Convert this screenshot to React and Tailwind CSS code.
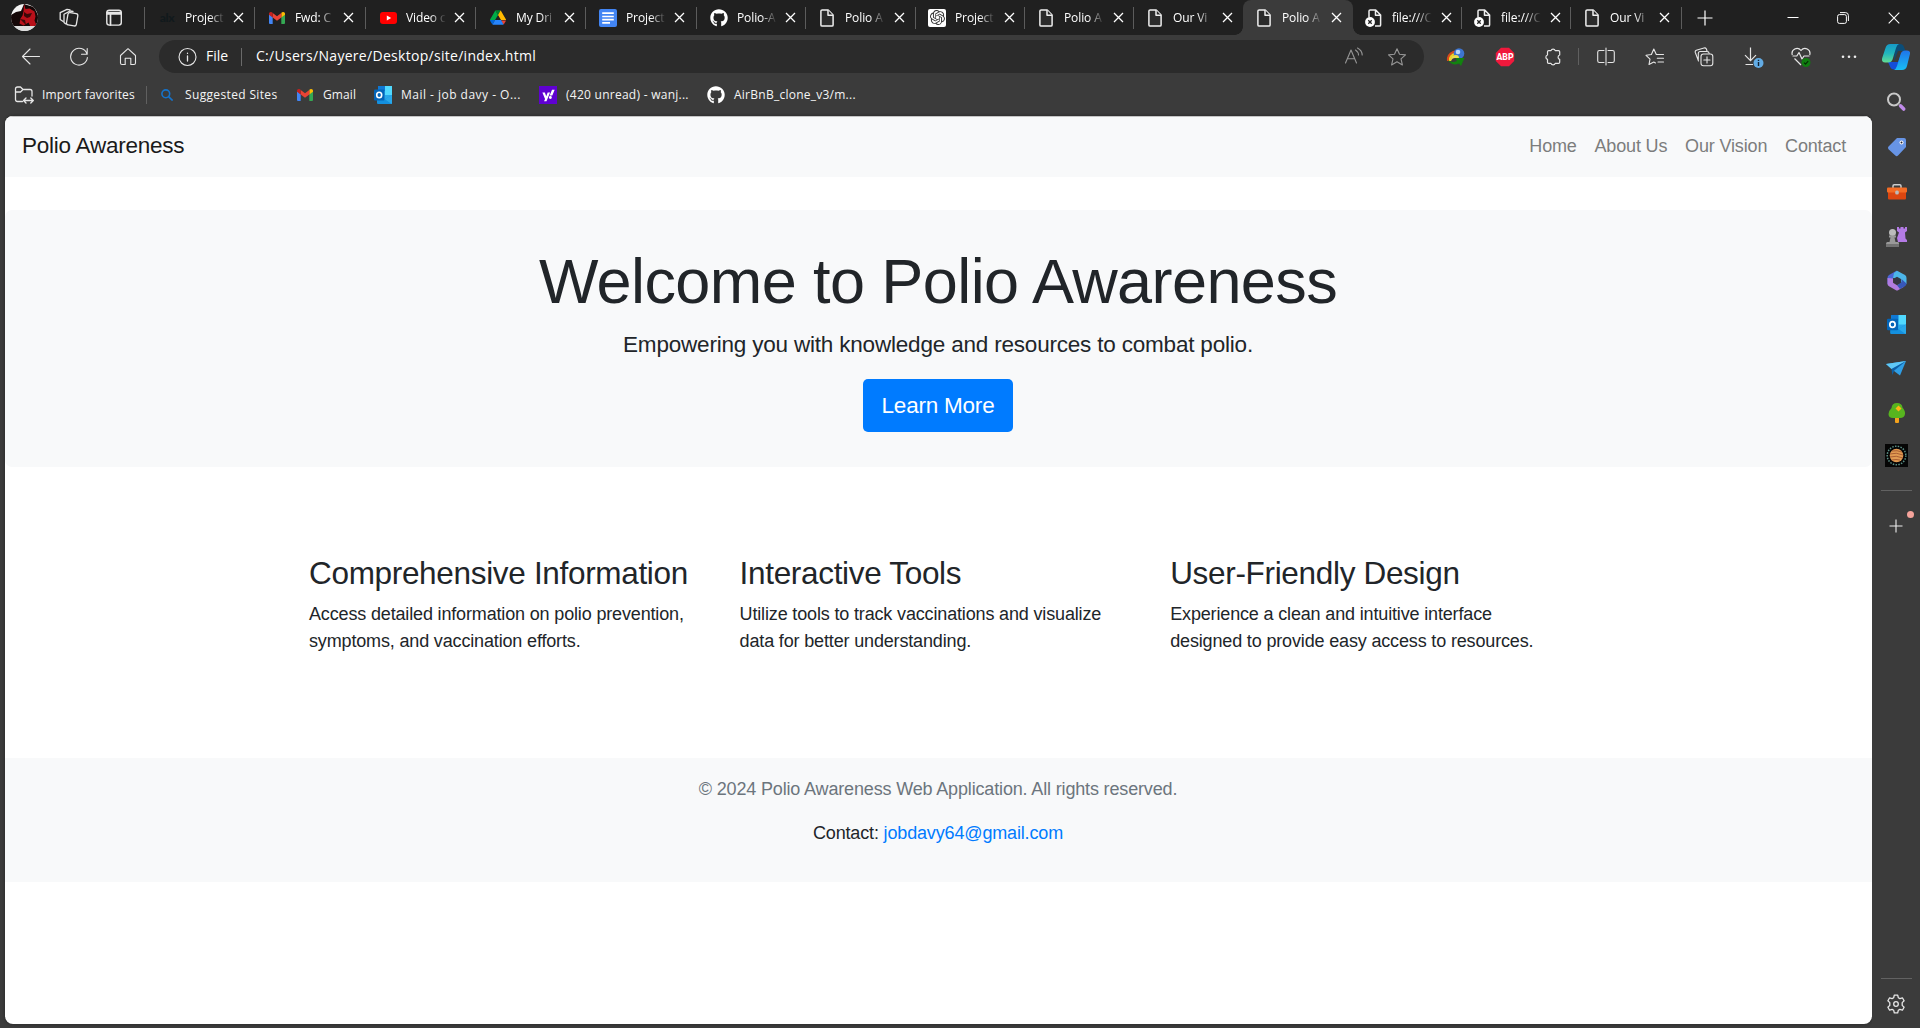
import React from "react";
import { FaGithub, FaYahoo } from "react-icons/fa";
import { SiOpenai } from "react-icons/si";

const UI = "font-['Open_Sans','Noto_Sans',sans-serif]";

function Line({ size = 20, w = 1.1, color = "#e6e6e6", children }) {
  return (
    <svg width={size} height={size} viewBox="0 0 20 20" fill="none" stroke={color} strokeWidth={w} strokeLinecap="round" strokeLinejoin="round" className="shrink-0">
      {children}
    </svg>
  );
}

function Gmail() {
  return (
    <svg width="16" height="12" viewBox="0 0 16 12">
      <path d="M0 2v9a1 1 0 0 0 1 1h2.7V5Z" fill="#4285f4" />
      <path d="M12.3 5v7H15a1 1 0 0 0 1-1V2Z" fill="#34a853" />
      <path d="M12.3 1v4.5L16 2.7V1.8C16 .2 14-.6 12.7.5Z" fill="#fbbc04" />
      <path d="M3.7 5.5V.9L8 4.2 12.3.9v4.6L8 8.7Z" fill="#ea4335" />
      <path d="M0 1.8v.9l3.7 2.8V.9L3.3.5C2-.6 0 .2 0 1.8Z" fill="#c5221f" />
    </svg>
  );
}

function YouTube() {
  return (
    <svg width="17" height="12" viewBox="0 0 17 12">
      <rect width="17" height="12" rx="3" fill="#f00" />
      <path d="M6.8 3.4v5.2L11.2 6Z" fill="#fff" />
    </svg>
  );
}

function Drive() {
  return (
    <svg width="16" height="15" viewBox="0 0 87 78">
      <path d="m6.6 66.9 3.9 6.6c.8 1.4 2 2.5 3.3 3.3l13.7-23.8H0c0 1.6.4 3.1 1.2 4.5Z" fill="#0066da" />
      <path d="M43.7 25 29.9 1.2c-1.4.8-2.5 1.9-3.3 3.3L1.2 48.5A9 9 0 0 0 0 53h27.5Z" fill="#00ac47" />
      <path d="M73.6 76.8c1.3-.8 2.5-1.9 3.3-3.3l8.3-13.9c.8-1.4 1.2-3 1.2-4.5H59.8l5.9 11.5Z" fill="#ea4335" />
      <path d="M43.7 25 57.4 1.2C56.100.4 54.500 0 52.900 0H34.400c-1.600 0-3.100.4-4.500 1.200Z" fill="#00832d" />
      <path d="M59.8 53H27.5L13.8 76.8c1.3.8 2.9 1.2 4.5 1.2h50.8c1.6 0 3.2-.4 4.5-1.2Z" fill="#2684fc" />
      <path d="m73.4 26.5-12.7-22c-.8-1.4-1.9-2.5-3.3-3.3L43.7 25l16.1 28h27.5c0-1.6-.4-3.1-1.2-4.5Z" fill="#ffba00" />
    </svg>
  );
}

function Docs() {
  return (
    <svg width="18" height="18" viewBox="0 0 18 18">
      <rect width="18" height="18" rx="2" fill="#4285f4" />
      <path d="M3.2 4.2h11.6M3.2 7.5h11.6M3.2 10.7h11.6M3.2 13.9h7.800" stroke="#fff" strokeWidth="1.7" />
    </svg>
  );
}

function Page() {
  return (
    <svg width="14" height="18" viewBox="0 0 14 18" fill="#2b2b2b" stroke="#eee" strokeWidth="1.5" strokeLinejoin="round">
      <path d="M2.2.9h6l4.9 5v10q0 1.200-1.200 1.200H2.200Q.9 17.100.9 15.900V2.100Q.9.9 2.200.9Z" />
      <path d="M8 1v5.200h5" />
    </svg>
  );
}

function PageError() {
  return (
    <svg width="17" height="18" viewBox="0 0 17 18" fill="none" stroke="#eee" strokeWidth="1.5" strokeLinejoin="round">
      <path d="M4 8V2.100Q4 .9 5.200.9h5.500l4.900 5v10q0 1.200-1.200 1.200H10M10.500 1v5.200h5" />
      <circle cx="5" cy="13" r="4.900" fill="#fff" stroke="none" />
      <path d="m3.300 11.300 3.400 3.400m0-3.400-3.400 3.400" stroke="#222" strokeWidth="1.300" />
    </svg>
  );
}

function ChatGpt() {
  return (
    <span className="flex size-[18px] items-center justify-center rounded-[2px] bg-white text-[#333]">
      <SiOpenai size={15} />
    </span>
  );
}

function Outlook({ size = 18 }) {
  return (
    <svg width={size} height={size} viewBox="0 0 18 18">
      <rect x="4" y="0" width="14" height="14" rx="1" fill="#28a8ea" />
      <rect x="4" y="0" width="7" height="5" fill="#0f78d4" />
      <rect x="11" y="0" width="7" height="9" fill="#50d9ff" />
      <path d="m3 9 7.500 4.500L18 9v8q0 1-1 1H4q-1 0-1-1Z" fill="#1490df" />
      <path d="m18 9-7 4.300L17.500 18q.5-.2.500-1Z" fill="#28a8ea" />
      <rect x="0" y="3.500" width="10.500" height="11" rx="1" fill="#0364b8" />
      <ellipse cx="5.200" cy="9" rx="2.500" ry="2.800" fill="none" stroke="#fff" strokeWidth="1.600" />
    </svg>
  );
}

const tabs = [
  { w: "w-[110px]", icon: <span className="font-['Lato'] text-[12px] font-black leading-none tracking-tight text-[#11191c]">alx</span>, text: "Project" },
  { w: "w-[111px]", icon: <Gmail />, text: "Fwd: C" },
  { w: "w-[110px]", icon: <YouTube />, text: "Video c" },
  { w: "w-[110px]", icon: <Drive />, text: "My Dri" },
  { w: "w-[111px]", icon: <Docs />, text: "Project" },
  { w: "w-[109px]", icon: <FaGithub size={18} color="#fff" />, text: "Polio-A" },
  { w: "w-[110px]", icon: <Page />, text: "Polio A", shift: true },
  { w: "w-[109px]", icon: <ChatGpt />, text: "Project", shift: true },
  { w: "w-[109px]", icon: <Page />, text: "Polio A", shift: true },
  { w: "w-[109px]", icon: <Page />, text: "Our Vi", last: true, shift: true },
  { w: "w-[110px]", icon: <Page />, text: "Polio A", active: true, shift: true },
  { w: "w-[109px]", icon: <PageError />, text: "file:///C", shift: true, error: true },
  { w: "w-[109px]", icon: <PageError />, text: "file:///C", shift: true, error: true },
  { w: "w-[111px]", icon: <Page />, text: "Our Vi", shift: true },
];

function Tab({ w, icon, text, active, last, shift, error }) {
  const iconSpace = error ? "ml-[11px] mr-[10px]" : shift ? "ml-[12px] mr-[9px]" : "ml-[13px] mr-[9px]";
  return (
    <div className={`relative flex h-[35px] shrink-0 items-center ${w} ${active ? "rounded-t-[8px] bg-[#3b3b3b]" : ""}`}>
      {active && (
        <>
          <span className="absolute -left-2 bottom-0 size-2 bg-[radial-gradient(circle_at_0_0,#202020_7.5px,#3b3b3b_8px)]" />
          <span className="absolute -right-2 bottom-0 size-2 bg-[radial-gradient(circle_at_100%_0,#202020_7.5px,#3b3b3b_8px)]" />
        </>
      )}
      <span className={`flex w-[18px] shrink-0 justify-center ${iconSpace}`}>{icon}</span>
      <span className="w-[42px] shrink-0 overflow-hidden whitespace-nowrap text-[12px] leading-[18px] tracking-[-0.1px] text-white [mask-image:linear-gradient(to_right,#000_58%,transparent_95%)]">{text}</span>
      <svg className={`shrink-0 ${shift ? "ml-[7px]" : "ml-[6px]"}`} width="11" height="11" viewBox="0 0 11 11" stroke="#fff" strokeWidth="1.300">
        <path d="m1 1 9 9M10 1l-9 9" />
      </svg>
      {!active && !last && <span className="absolute right-0 top-[7px] h-[22px] w-px bg-[#5c5c5c]" />}
    </div>
  );
}

function TabStrip() {
  return (
    <div className="flex h-[35px] items-center bg-[#202020]">
      <svg className="ml-[11px] shrink-0" width="27" height="27" viewBox="0 0 27 27">
        <defs>
          <clipPath id="avatar"><circle cx="13.500" cy="13.500" r="13.500" /></clipPath>
        </defs>
        <g clipPath="url(#avatar)">
          <rect width="27" height="27" fill="#f3f3f3" />
          <path d="M0 11 5 8l5-1 3-7 3 1 7 2 4 8 2 10-4 1H0Z" fill="#150808" />
          <path d="m13 0 1.500 5 4-.5 5 3 1 5-1 4 2 5-6 1-2-4-5 3-4-2 1-5 2-3 1-4Z" fill="#b9101a" />
          <path d="m13 8 3 2 5-1-2 4-3 1-3-2ZM9 15l5 1 1 5M20 14l2 6" fill="#3b0808" />
          <path d="M0 22h27v5H0Z" fill="#ddd" />
        </g>
      </svg>
      <span className="ml-[21px] flex w-[20px] shrink-0"><Line size={20} w={1.300}>
        <rect x="8.200" y="5" width="10" height="12.500" rx="2" transform="rotate(10 13 11)" />
        <path d="M6.500 15.800 5 14.500V6.300l6-3.300 3 .5M3.800 13.200 1.200 11.500V4.600L8 1.300l3 .5" />
      </Line></span>
      <span className="ml-[25px] flex w-[20px] shrink-0"><Line size={20} w={1.400}>
        <rect x="2.800" y="2.300" width="14.500" height="14.800" rx="2.500" />
        <path d="M3 4.600h14M3 6h14M6.500 6v11" strokeWidth="1.700" />
      </Line></span>
      <span className="ml-[20px] h-[22px] w-px shrink-0 bg-[#5c5c5c]" />
      {tabs.map((t, i) => <Tab key={i} {...t} />)}
      <svg className="ml-[15px] shrink-0" width="16" height="16" viewBox="0 0 16 16" stroke="#fff" strokeWidth="1.200"><path d="M8 .5v15M.5 8h15" /></svg>
      <svg className="ml-[74px] shrink-0" width="12" height="12" viewBox="0 0 12 12" stroke="#fff"><path d="M.5 5.500h11" /></svg>
      <svg className="ml-[38px] shrink-0" width="12" height="12" viewBox="0 0 12 12" fill="none" stroke="#fff">
        <rect x=".6" y="2.600" width="8.800" height="8.800" rx="1.800" />
        <path d="M3 .6h5.500q2.900 0 2.900 2.900V9" />
      </svg>
      <svg className="ml-[39px] shrink-0" width="12" height="12" viewBox="0 0 12 12" stroke="#fff" strokeWidth="1.100"><path d="m.7.7 10.600 10.600m0-10.600L.7 11.300" /></svg>
    </div>
  );
}

function Slot({ w = "w-[49px]", children }) {
  return <div className={`flex shrink-0 items-center justify-center ${w}`}>{children}</div>;
}

function Copilot() {
  return (
    <svg width="28" height="26" viewBox="0 0 28 26">
      <defs>
        <linearGradient id="cpA" x1="0" y1="0" x2="0" y2="1"><stop stopColor="#1699c7" /><stop offset=".5" stopColor="#21b6bd" /><stop offset="1" stopColor="#62dc93" /></linearGradient>
        <linearGradient id="cpB" x1="0" y1="0" x2="0" y2="1"><stop stopColor="#1f74e8" /><stop offset="1" stopColor="#18bdf5" /></linearGradient>
      </defs>
      <path d="M13 0h5q3 0 4 3l1.500 4H16l-4 10Z" fill="#0b4d78" />
      <path d="M6 18h10l4-10 2 12-3 5.500h-7q-3 0-4-3Z" fill="#144ed8" />
      <path d="M8.500 0H17q-2 .5-3 4l-3 10q-1 4.500-5 4.500H3q-4 0-2.800-4.500L3.500 4q1-4 5-4Z" fill="url(#cpA)" />
      <path d="M20 26h-8q2-1 3-4l3.500-11.500q1-4 5-4H25q4 0 2.800 4L25 22q-1 4-5 4Z" fill="url(#cpB)" />
    </svg>
  );
}

function Toolbar() {
  return (
    <div className="flex h-[43px] items-center pl-[7px]">
      <Slot w="w-[47px]"><Line><path d="M18.500 9.500H1.500M9 2 1.500 9.500 9 17" /></Line></Slot>
      <Slot><Line><path d="M18 7A8.400 8.400 0 1 0 18.400 10.500M18.200 1.500v5.700h-5.700" /></Line></Slot>
      <Slot><Line><path d="M2.500 8.500 10 1.700 17.500 8.500v7.500q0 1.500-1.500 1.500h-3.200v-6.300H7.200v6.300H4q-1.500 0-1.500-1.500Z" /></Line></Slot>
      <div className="ml-[7px] flex h-[33px] w-[1265px] shrink-0 items-center rounded-full bg-[#2b2b2b] pl-[19px]">
        <Line><circle cx="9.500" cy="10" r="8.500" /><path d="M9.500 9v5M9.500 6.200v.2" strokeWidth="1.300" /></Line>
        <span className="-mt-px ml-[8px] w-[35px] text-[14px] leading-5 text-white">File</span>
        <span className="h-[18px] w-px bg-[#6a6a6a]" />
        <span className="-mt-px ml-[14px] whitespace-nowrap text-[14px] leading-5 tracking-[0.29px] text-white">C:/Users/Nayere/Desktop/site/index.html</span>
        <div className="ml-auto flex pr-[17px]">
          <Line color="#969696"><path d="M1.500 16 7 3l5.500 13M3.500 11.700h7M11.500 3q3 2 3 5M13.500 1q4.500 2.300 4.700 7" /></Line>
          <span className="w-[23px]" />
          <Line color="#969696"><path d="m10 1.700 2.500 5.600 6 .6-4.500 4 1.400 6L10 14.800 4.600 17.900l1.400-6-4.500-4 6-.6Z" /></Line>
        </div>
      </div>
      <span className="w-[7px] shrink-0" />
      <Slot>
        <svg width="20" height="18" viewBox="0 0 20 18">
          <path d="M1 13Q0 6 7 3l4-1v2Q3 5 3 13Z" fill="#d94a1b" />
          <path d="M3 13Q2 6 10 4.500V7q-5 0-5 6Z" fill="#f2cf24" />
          <circle cx="13" cy="5.500" r="5.300" fill="#3d74cf" />
          <circle cx="12" cy="4" r="2.300" fill="#b7d8fb" />
          <path d="M5 11q0-4 5-4 3 0 3 3H9q-3 0-4 3Z" fill="#e8e04a" />
          <path d="M2 12q4 3.500 9 1L9.500 10l9 0L15 18l-2-2.500q-7 3-11-3.500Z" fill="#12820f" />
        </svg>
      </Slot>
      <Slot>
        <svg width="20" height="20" viewBox="0 0 20 20">
          <path d="M6 .8h8L19.200 6v8L14 19.200H6L.8 14V6Z" fill="#f0193c" />
          <text x="10" y="13.300" textAnchor="middle" fontFamily="Roboto" fontWeight="800" fontSize="8.700" fill="#fff">ABP</text>
        </svg>
      </Slot>
      <Slot w="w-[48px]"><Line w={1.200}><path d="M5.700 3.600H8a2.200 2.200 0 0 1 4.200 0h3.300q1.200 0 1.200 1.200V8a2.300 2.300 0 0 0 0 4.400v2.800q0 1.200-1.200 1.200h-3.300a2.200 2.200 0 0 1-4.200 0H5.700q-1.200 0-1.200-1.200v-2.800a2.300 2.300 0 0 1 0-4.400V4.800q0-1.200 1.200-1.200Z" /></Line></Slot>
      <span className="ml-px mr-[2px] h-[17px] w-px shrink-0 bg-[#606060]" />
      <Slot><Line><path d="M8 3.500H3.500Q1.700 3.500 1.700 5.300v8.400q0 1.800 1.800 1.800H8M12 3.500h4.500q1.800 0 1.800 1.800v8.400q0 1.800-1.800 1.800H12M10 1v17" /></Line></Slot>
      <Slot><Line><path d="M10.500 16 8.800 15 4 17.500l1-5.400-4-3.800 5.400-.8L8.800 2l2.500 5.500h7.200M12.300 11.200h6.200M13 15h5.500" /></Line></Slot>
      <Slot><Line>
        <rect x="7" y="7" width="11.800" height="11.800" rx="2.500" /><path d="M13 9.800v6.200M9.800 13H16M4.500 14 1.300 5.500q-.5-1.600 1-2.300L10 1q1.600-.4 2.400 1l.6 2M7 4.500H13q2 0 2.200 2M4.300 12.500V6.500q0-2 2-2H7" />
      </Line></Slot>
      <Slot>
        <svg width="22" height="22" viewBox="0 0 22 22" fill="none" stroke="#e6e6e6" strokeWidth="1.200">
          <path d="M8.500 1.500v13M3 9.200l5.500 5.500L14 9.200M3.500 18.500H11" />
          <circle cx="16.500" cy="17" r="5" fill="#63ace5" stroke="none" />
          <path d="M16.500 16v4M16.500 13.800v1.300" stroke="#123" strokeWidth="1.400" />
        </svg>
      </Slot>
      <Slot w="w-[48px]">
        <svg width="20" height="20" viewBox="0 0 20 20" fill="none" stroke="#e6e6e6" strokeWidth="1.200" strokeLinejoin="round">
          <path d="M1.300 8C-.3 2.500 6.500-1 10 3.500 13.500-1 20.300 2.500 18.700 8M1.500 9h4.300l2.200-3.500 3 6.500 2-3h5.500M3.500 11.500 10 18" />
          <circle cx="15" cy="15.500" r="4.500" fill="#107c10" stroke="none" />
          <path d="m13 15.600 1.500 1.500 2.700-3" stroke="#052d05" />
        </svg>
      </Slot>
      <Slot w="w-[47px]"><svg width="16" height="4" viewBox="0 0 16 4" fill="#eee"><circle cx="2" cy="1.700" r="1.300" /><circle cx="8" cy="1.700" r="1.300" /><circle cx="14" cy="1.700" r="1.300" /></svg></Slot>
      <Slot w="w-[48px]"><Copilot /></Slot>
    </div>
  );
}

function Favorite({ icon, text, w, tracking = "" }) {
  return (
    <div className={`flex shrink-0 items-center ${w}`}>
      <span className="flex w-[18px] shrink-0 justify-center">{icon}</span>
      <span className={`ml-[9px] whitespace-nowrap text-[12px] leading-[18px] text-[#f4f4f4] ${tracking}`}>{text}</span>
    </div>
  );
}

function FavoritesBar() {
  return (
    <div className="mt-px flex h-[32px] items-center pl-[15px]">
      <Favorite w="w-[131px]" text="Import favorites" tracking="tracking-[0.19px]" icon={
        <Line w={1.300}><path d="M8.500 16.500H3.500Q1.500 16.500 1.500 14.500V4q0-2 2-2h3l2.500 2.500h7q2 0 2 2V11M1.500 7h5L9 4.500M10 15.500h9M12 13l-2.500 2.500L12 18M16.800 13l2.500 2.500-2.500 2.500" /></Line>
      } />
      <span className="mr-[11px] h-[18px] w-px shrink-0 bg-[#606060]" />
      <Favorite w="w-[138px]" text="Suggested Sites" tracking="tracking-[0.35px]" icon={
        <svg width="12" height="12" viewBox="0 0 12 12" fill="none" stroke="#1573cb" strokeWidth="1.600"><circle cx="4.800" cy="4.800" r="3.900" /><path d="m7.600 7.600 4 4" /></svg>
      } />
      <Favorite w="w-[78px]" text="Gmail" tracking="tracking-[0.1px]" icon={<Gmail />} />
      <Favorite w="w-[165px]" text="Mail - job davy - O..." tracking="tracking-[0.48px]" icon={<Outlook />} />
      <Favorite w="w-[168px]" text="(420 unread) - wanj..." tracking="tracking-[0.26px]" icon={<span className="flex size-[18px] items-center justify-center bg-[#5f01d1] text-white"><FaYahoo size={13} /></span>} />
      <Favorite w="w-[160px]" text="AirBnB_clone_v3/m..." tracking="tracking-[0.25px]" icon={<FaGithub size={18} color="#fff" />} />
    </div>
  );
}

function Sidebar() {
  return (
    <div className="flex w-[48px] shrink-0 flex-col items-center bg-[#3b3b3b]">
      <svg className="-mt-[24px] ml-px shrink-0" width="20" height="20" viewBox="0 0 20 20" fill="none">
        <circle cx="7" cy="7.500" r="6" stroke="#c9c9c9" strokeWidth="2" />
        <path d="m11.500 12 2 2" stroke="#888" strokeWidth="2" /><path d="m13.700 14 3 3" stroke="#c08bea" strokeWidth="3.600" strokeLinecap="round" />
      </svg>
      <svg className="mt-[25px] ml-px shrink-0" width="20" height="20" viewBox="0 0 20 20">
        <path d="M10 1h7q2 0 2 2v7l-8 8.500q-1.300 1.300-2.700 0L1.500 12.200q-1.200-1.300 0-2.700Z" fill="#6794e5" />
        <circle cx="14.500" cy="5.500" r="2" fill="#fff" /><circle cx="14.500" cy="5.500" r="1" fill="#223" />
      </svg>
      <svg className="mt-[25px] ml-px shrink-0" width="20" height="20" viewBox="0 0 20 20">
        <path d="M6 6V4q0-1.200 1.200-1.200h5.600Q14 2.800 14 4v2" fill="none" stroke="#ccc" strokeWidth="1.500" />
        <rect x="1" y="9" width="18" height="8.500" rx="1" fill="#dc4610" /><rect x="0" y="5.500" width="20" height="5" rx="1" fill="#f46c25" />
        <rect x="8.200" y="8.500" width="3.600" height="4" rx="1.500" fill="#bbb" />
      </svg>
      <svg className="mt-[24px] ml-px shrink-0" width="21" height="21" viewBox="0 0 21 21">
        <path d="M11 1h2v1.500h1.500V1h3v1.500H19V1h2v4l-2 1.500.5 6L21 14v2h-9l-1-4 2-5.500L11 5Z" fill="#b47be6" />
        <circle cx="6.500" cy="6.500" r="3.500" fill="#bbb" /><path d="M3 9.500h7v2H8.500l1 4.500H12q1 0 1 1.500V21H0v-3q0-2 1.500-2h2l1-4.500H3Z" fill="#999" /><path d="M0 18h13v3H0Z" fill="#737373" />
      </svg>
      <svg className="mt-[23px] ml-px shrink-0" width="20" height="21" viewBox="0 0 20 21">
        <path d="M9 1 2 5Q.5 6 .5 8v6l5.500-1V8l7-5-2-1.500Q10 .5 9 1Z" fill="#4b65d6" />
        <path d="m10 .8 8 4.200q1.500 1 1.500 3v6L14 12.500V9L6 8l1-5Z" fill="#4cb5e9" />
        <path d="M.5 8v6q0 1.500 1.500 2.300l7 3.900q1 .6 2 0l6-3.500-1-4-6 2.500-4-2.500V8.500Z" fill="#b17ce1" />
        <path d="m10 15.200 4.500-3V9l5 4.500q0 1.800-1.500 2.700l-5 2.800Z" fill="#3757b8" />
        <path d="m7 8.500 3-1.700 3.500 2v3.400L10 14.200l-3-2Z" fill="#343645" />
      </svg>
      <span className="mt-[24px] ml-px flex"><Outlook size={19} /></span>
      <svg className="mt-[27px] shrink-0" width="20" height="15" viewBox="0 0 20 15">
        <path d="m0 3 20-3-6 14.500-6-4.500Z" fill="#2f9ee5" /><path d="M0 3 20 0 5.500 8Z" fill="#5fc8f6" /><path d="M5.500 8 20 0 8.300 9.500l-2 4.500Z" fill="#0d5fa5" />
      </svg>
      <svg className="mt-[27px] ml-px shrink-0" width="18" height="20" viewBox="0 0 18 20">
        <rect x="7" y="12" width="4" height="8" rx="1" fill="#f4a21c" />
        <path d="M9 0q5 0 5.500 4.500Q17.500 8 17 11q-.5 4-5 4H5q-4.500-.2-4.500-4Q.5 8 3.500 5 4 0 9 0Z" fill="#57b51f" />
        <path d="m10.500 2.500 3 3-3 3-3-3Z" fill="#ffb515" />
      </svg>
      <svg className="mt-[21px] ml-px shrink-0" width="23" height="23" viewBox="0 0 23 23">
        <rect width="23" height="23" fill="#050505" />
        <circle cx="11.500" cy="11.500" r="9.300" fill="none" stroke="#5b8f86" strokeWidth="1.500" strokeDasharray="1.500 1.300" />
        <circle cx="11.500" cy="11.500" r="6.800" fill="#e09a52" />
        <path d="M5 10q6-2 13 1M5 13q6-2 13 1M7 7q5-1 10 1M7 16q4-1 8 0" fill="none" stroke="#9b4e2a" strokeWidth=".8" />
      </svg>
      <span className="mt-[23px] h-px w-[31px] shrink-0 bg-[#626262]" />
      <div className="relative mt-[28px]">
        <svg width="14" height="14" viewBox="0 0 14 14" stroke="#eee" strokeWidth="1.100"><path d="M7 .5v13M.5 7h13" /></svg>
        <span className="absolute -right-[11px] -top-[8px] size-[7px] rounded-full bg-[#f5a39b]" />
      </div>
      <span className="mt-auto h-px w-[31px] shrink-0 bg-[#626262]" />
      <span className="mb-[14px] mt-[15px] flex">
        <Line w={1.300}>
          <path d="m8.300 1.200h3.400l.6 2.500 1.600.9 2.500-.8 1.700 3-1.900 1.800v2.800l1.900 1.800-1.700 3-2.500-.8-1.600.9-.6 2.500H8.300l-.6-2.500-1.600-.9-2.500.8-1.700-3 1.900-1.800V8.600L1.900 6.800l1.700-3 2.500.8 1.600-.9Z" />
          <circle cx="10" cy="10" r="2.300" />
        </Line>
      </span>
    </div>
  );
}

const features = [
  { title: "Comprehensive Information", lines: ["Access detailed information on polio prevention,", "symptoms, and vaccination efforts."] },
  { title: "Interactive Tools", lines: ["Utilize tools to track vaccinations and visualize", "data for better understanding."] },
  { title: "User-Friendly Design", lines: ["Experience a clean and intuitive interface", "designed to provide easy access to resources."] },
];

function Website() {
  return (
    <main className="h-[908px] w-[1867px] shrink-0 overflow-hidden rounded-[8px] bg-white font-['Liberation_Sans',Arial,sans-serif] text-[18px] leading-[27px] tracking-[-0.156px] text-[#212529] shadow-[0_0_3px_#222]">
      <nav className="flex h-[61px] items-center justify-between border-t border-[#c4c4c4] bg-[#f8f9fa] pl-[17px] pr-[26px]">
        <span className="-mt-[3px] text-[22.5px] leading-[34px] tracking-[-0.25px] text-[#1a1a1a]">Polio Awareness</span>
        <div className="-mt-[1px] flex gap-[17.8px] text-[#7c7d7d]">
          <a>Home</a><a>About Us</a><a>Our Vision</a><a>Contact</a>
        </div>
      </nav>
      <header className="mt-[33px] flex h-[257px] flex-col items-center rounded-[7px] bg-[#f8f9fa] pr-px pt-[33px]">
        <h1 className="text-[63px] leading-[76px] tracking-[-0.59px]">Welcome to Polio Awareness</h1>
        <p className="mt-[9px] text-[22.5px] leading-[34px] tracking-[-0.195px]">Empowering you with knowledge and resources to combat polio.</p>
        <button className="mt-[17px] h-[53px] w-[150px] rounded-[5px] bg-[#007bff] text-[22.5px] leading-[34px] tracking-[-0.22px] text-white">Learn More</button>
      </header>
      <section className="mt-[87px] grid h-[204px] grid-cols-[430.6px_430.6px_430.6px] pl-[304px]">
        {features.map((f) => (
          <article key={f.title} className="whitespace-nowrap">
            <h3 className="text-[31.5px] leading-[38px] tracking-[-0.32px]">{f.title}</h3>
            <p className="mt-[9px]">{f.lines[0]}<br />{f.lines[1]}</p>
          </article>
        ))}
      </section>
      <footer className="flex h-[124px] flex-col items-center gap-[17px] bg-[#f8f9fa] pr-px pt-[18px]">
        <p className="text-[#6c757d]">© 2024 Polio Awareness Web Application. All rights reserved.</p>
        <p>Contact: <a className="text-[#007bff]">jobdavy64@gmail.com</a></p>
      </footer>
    </main>
  );
}

export default function App() {
  return (
    <div className={`flex h-[1028px] w-[1920px] flex-col overflow-hidden bg-[#3b3b3b] ${UI}`}>
      <TabStrip />
      <Toolbar />
      <FavoritesBar />
      <div className="mt-[5px] flex h-[912px] pl-[5px]">
        <Website />
        <Sidebar />
      </div>
    </div>
  );
}
